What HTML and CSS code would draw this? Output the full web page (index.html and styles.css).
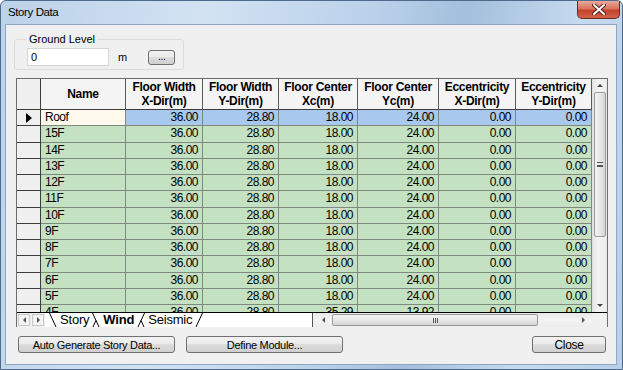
FILE: index.html
```html
<!DOCTYPE html>
<html lang="en">
<head>
  <meta charset="UTF-8">
  <title>Story Data</title>
  <link rel="stylesheet" href="styles.css">
</head>
<body>

<div class="window">
  <div class="titlebar">
    <span class="title">Story Data</span>
    <button class="close-btn">
      <svg width="14" height="11" viewBox="0 0 14 11">
        <path d="M2 1 L12 10 M12 1 L2 10" stroke="#5a1d14" stroke-width="4" stroke-linecap="round"/>
        <path d="M2 1 L12 10 M12 1 L2 10" stroke="#fff" stroke-width="2" stroke-linecap="round"/>
      </svg>
    </button>
  </div>

  <div class="client">
    <fieldset class="group">
      <legend>Ground Level</legend>
      <input class="level" type="text" value="0">
      <span class="unit">m</span>
      <button class="btn dots">...</button>
    </fieldset>

    <div class="spread">
      <div class="spread-main">
        <div class="sheet">
          <div class="rh"></div>
          <div class="hd">Name</div>
          <div class="hd">Floor Width<br>X-Dir(m)</div>
          <div class="hd">Floor Width<br>Y-Dir(m)</div>
          <div class="hd">Floor Center<br>Xc(m)</div>
          <div class="hd">Floor Center<br>Yc(m)</div>
          <div class="hd">Eccentricity<br>X-Dir(m)</div>
          <div class="hd">Eccentricity<br>Y-Dir(m)</div>

          <div class="rh"><i class="marker"></i></div>
          <div class="c name current">Roof</div>
          <div class="c sel">36.00</div><div class="c sel">28.80</div><div class="c sel">18.00</div><div class="c sel">24.00</div><div class="c sel">0.00</div><div class="c sel">0.00</div>

          <div class="rh"></div><div class="c name">15F</div>
          <div class="c">36.00</div><div class="c">28.80</div><div class="c">18.00</div><div class="c">24.00</div><div class="c">0.00</div><div class="c">0.00</div>

          <div class="rh"></div><div class="c name">14F</div>
          <div class="c">36.00</div><div class="c">28.80</div><div class="c">18.00</div><div class="c">24.00</div><div class="c">0.00</div><div class="c">0.00</div>

          <div class="rh"></div><div class="c name">13F</div>
          <div class="c">36.00</div><div class="c">28.80</div><div class="c">18.00</div><div class="c">24.00</div><div class="c">0.00</div><div class="c">0.00</div>

          <div class="rh"></div><div class="c name">12F</div>
          <div class="c">36.00</div><div class="c">28.80</div><div class="c">18.00</div><div class="c">24.00</div><div class="c">0.00</div><div class="c">0.00</div>

          <div class="rh"></div><div class="c name">11F</div>
          <div class="c">36.00</div><div class="c">28.80</div><div class="c">18.00</div><div class="c">24.00</div><div class="c">0.00</div><div class="c">0.00</div>

          <div class="rh"></div><div class="c name">10F</div>
          <div class="c">36.00</div><div class="c">28.80</div><div class="c">18.00</div><div class="c">24.00</div><div class="c">0.00</div><div class="c">0.00</div>

          <div class="rh"></div><div class="c name">9F</div>
          <div class="c">36.00</div><div class="c">28.80</div><div class="c">18.00</div><div class="c">24.00</div><div class="c">0.00</div><div class="c">0.00</div>

          <div class="rh"></div><div class="c name">8F</div>
          <div class="c">36.00</div><div class="c">28.80</div><div class="c">18.00</div><div class="c">24.00</div><div class="c">0.00</div><div class="c">0.00</div>

          <div class="rh"></div><div class="c name">7F</div>
          <div class="c">36.00</div><div class="c">28.80</div><div class="c">18.00</div><div class="c">24.00</div><div class="c">0.00</div><div class="c">0.00</div>

          <div class="rh"></div><div class="c name">6F</div>
          <div class="c">36.00</div><div class="c">28.80</div><div class="c">18.00</div><div class="c">24.00</div><div class="c">0.00</div><div class="c">0.00</div>

          <div class="rh"></div><div class="c name">5F</div>
          <div class="c">36.00</div><div class="c">28.80</div><div class="c">18.00</div><div class="c">24.00</div><div class="c">0.00</div><div class="c">0.00</div>

          <div class="rh"></div><div class="c name">4F</div>
          <div class="c">36.00</div><div class="c">28.80</div><div class="c">35.29</div><div class="c">13.92</div><div class="c">0.00</div><div class="c">0.00</div>
        </div>

        <div class="vscroll">
          <div class="sb-arrow"><i class="tri up"></i></div>
          <div class="v-thumb"><span class="grip-v"></span></div>
          <div class="sb-fill"></div>
          <div class="sb-arrow"><i class="tri down"></i></div>
        </div>
      </div>

      <div class="spread-foot">
        <div class="tab-nav">
          <span class="nav-btn"><i class="tri left"></i></span>
          <span class="nav-btn"><i class="tri right"></i></span>
        </div>
        <div class="tabs">
          <svg class="edge" width="8" height="15" viewBox="0 0 8 15"><path d="M0.5 0 L7.5 15" stroke="#000"/></svg>
          <span class="tab">Story</span>
          <svg class="edge" width="8" height="15" viewBox="0 0 8 15"><path d="M0.5 0 L7.5 15 M0.5 15 L4 7.5" stroke="#000"/></svg>
          <span class="tab active">Wind</span>
          <svg class="edge" width="8" height="15" viewBox="0 0 8 15"><path d="M0.5 15 L7.5 0 M4 7.5 L7.5 15" stroke="#000"/></svg>
          <span class="tab">Seismic</span>
          <svg class="edge" width="8" height="15" viewBox="0 0 8 15"><path d="M0.5 15 L7.5 0" stroke="#000"/></svg>
        </div>
        <div class="hscroll">
          <div class="sb-arrow h"><i class="tri left"></i></div>
          <div class="h-thumb"><span class="grip-h"></span></div>
          <div class="sb-fill"></div>
          <div class="sb-arrow h"><i class="tri right"></i></div>
        </div>
        <div class="corner"></div>
      </div>
    </div>

    <div class="actions">
      <button class="btn wide">Auto Generate Story Data...</button>
      <button class="btn wide">Define Module...</button>
      <button class="btn close">Close</button>
    </div>
  </div>
</div>

</body>
</html>
```

FILE: styles.css
```css
* { box-sizing: border-box; }

body {
  margin: 0;
  font-family: 'Liberation Sans', Arial, sans-serif;
  font-size: 12px;
  color: #000;
  background: #fff;
}

.window {
  width: 623px;
  height: 370px;
  display: flex;
  flex-direction: column;
  border: 1px solid #4f6a8b;
  border-radius: 6px 6px 0 0;
  padding: 0 5px 4px 4px;
  background: linear-gradient(100deg, #bcd2e9 0%, #d2e2f3 30%, #bad1ea 55%, #a3bfdd 68%, #c6daef 85%, #b7cfe9 100%);
}

.titlebar {
  height: 23px;
  display: flex;
  align-items: center;
  padding-left: 3px;
}

.title {
  font-size: 11.5px;
  letter-spacing: -0.4px;
  color: #000;
  margin-top: -1px;
}

.close-btn {
  margin: -5px -3px 0 auto;
  width: 43px;
  height: 18px;
  padding: 0;
  display: flex;
  align-items: center;
  justify-content: center;
  border: 1px solid #6b2a22;
  border-top: none;
  border-radius: 0 0 5px 5px;
  background: linear-gradient(#e9a99c 0%, #d8735f 45%, #c4412a 55%, #d2644a 100%);
}

.client {
  flex: 1;
  display: flex;
  flex-direction: column;
  background: #f0f0f0;
  border: 1px solid #8ea6c2;
}

/* ground level group */
.group {
  margin: 8px 0 0 8px;
  width: 170px;
  padding: 2px 8px 3px 12px;
  border: 1px solid #dcdcdc;
  border-radius: 3px;
  display: flex;
  align-items: center;
}

.group legend {
  font-size: 11px;
  line-height: 13px;
  padding: 0 2px;
  margin-left: 0;
}

.level {
  width: 82px;
  height: 18px;
  border: 1px solid #d5d5d5;
  background: #fff;
  font: 11px 'Liberation Sans', Arial, sans-serif;
  padding: 0 3px;
}

.unit {
  font-size: 11px;
  margin-left: 9px;
}

.btn {
  font: 11px 'Liberation Sans', Arial, sans-serif;
  letter-spacing: -0.3px;
  color: #000;
  border: 1px solid #707070;
  border-radius: 3px;
  background: linear-gradient(#f2f2f2 0%, #ebebeb 45%, #dddddd 50%, #cfcfcf 100%);
  padding: 0;
}

.dots {
  width: 27px;
  height: 15px;
  margin-left: 21px;
  line-height: 10px;
  font-size: 10px;
}

/* spreadsheet */
.spread {
  margin: 8px 0 0 10px;
  width: 592px;
  border: 1px solid #6d6d6d;
  border-bottom: none;
}

.spread-main {
  display: flex;
  height: 233px;
}

.sheet {
  width: 575px;
  height: 233px;
  overflow: hidden;
  display: grid;
  grid-template-columns: 24px 85px 77px 76px 79px 81px 77px 76px;
  grid-template-rows: 31px repeat(13, 16.25px);
  background: #fff;
}

.rh {
  background: #f0f0f0;
  border-right: 1px solid #3c3c3c;
  border-bottom: 1px solid #3c3c3c;
  display: flex;
  align-items: center;
  justify-content: center;
}

.marker {
  width: 0;
  height: 0;
  border-top: 5px solid transparent;
  border-bottom: 5px solid transparent;
  border-left: 6px solid #000;
}

.hd {
  background: #f4f4f4;
  border-right: 1px solid #5a5a5a;
  border-bottom: 1px solid #3c3c3c;
  display: flex;
  align-items: center;
  justify-content: center;
  text-align: center;
  font-weight: bold;
  font-size: 12px;
  letter-spacing: -0.3px;
  line-height: 14px;
}

.c {
  background: #c4e1c1;
  border-right: 1px solid #7f897f;
  border-bottom: 1px solid #7f897f;
  display: flex;
  align-items: center;
  justify-content: flex-end;
  padding: 0 4px 1px 0;
  font-size: 12px;
  letter-spacing: -0.5px;
  white-space: nowrap;
}

.c.name {
  justify-content: flex-start;
  padding: 0 0 1px 4px;
}

.c.sel { background: #a9c8ee; }
.c.current { background: #fff9ee; }

/* scrollbars */
.vscroll {
  width: 15px;
  display: flex;
  flex-direction: column;
  background: linear-gradient(90deg, #e6e6e6, #f4f4f4 40%, #eaeaea);
  border-left: 1px solid #e0e0e0;
}

.sb-arrow {
  height: 13px;
  display: flex;
  align-items: center;
  justify-content: center;
}

.sb-arrow.h {
  width: 12px;
  height: auto;
}

.sb-fill { flex: 1; }

.v-thumb {
  height: 145px;
  margin: 0 1px;
  border: 1px solid #9a9a9a;
  border-radius: 2px;
  background: linear-gradient(90deg, #f3f3f3, #e8e8e8 50%, #d6d6d6);
  display: flex;
  align-items: center;
  justify-content: center;
}

.grip-v {
  width: 6px;
  height: 5px;
  border-top: 1px solid #555;
  border-bottom: 1px solid #555;
  background: linear-gradient(#fff0 2px, #555 2px, #555 3px, #fff0 3px);
}

.h-thumb {
  width: 206px;
  margin: 1px 0;
  border: 1px solid #9a9a9a;
  border-radius: 2px;
  background: linear-gradient(#f3f3f3, #e8e8e8 50%, #d6d6d6);
  display: flex;
  align-items: center;
  justify-content: center;
}

.grip-h {
  width: 5px;
  height: 5px;
  border-left: 1px solid #555;
  border-right: 1px solid #555;
  background: linear-gradient(90deg, #fff0 1px, #555 1px, #555 2px, #fff0 2px);
}

.tri {
  width: 0;
  height: 0;
  border: 3px solid transparent;
}
.tri.up { border-bottom: 3px solid #444; border-top-width: 0; }
.tri.down { border-top: 3px solid #444; border-bottom-width: 0; }
.tri.left { border-right: 3px solid #555; border-left-width: 0; }
.tri.right { border-left: 3px solid #555; border-right-width: 0; }

/* sheet tabs + horizontal scroll */
.spread-foot {
  height: 15px;
  display: flex;
  border-top: 1px solid #000;
}

.tab-nav {
  width: 28px;
  display: flex;
  gap: 2px;
  padding: 1px 0 1px 1px;
  background: #f0f0f0;
}

.nav-btn {
  width: 12px;
  border: 1px solid #c8c8c8;
  background: #f4f4f4;
  display: flex;
  align-items: center;
  justify-content: center;
}

.tabs {
  width: 268px;
  display: flex;
  align-items: center;
  background: #fff;
  border-right: 1px solid #555;
  padding-left: 4px;
  overflow: hidden;
}

.edge { flex: none; display: block; }

.tab {
  font-size: 13px;
  line-height: 14px;
  padding: 0 3px;
  letter-spacing: -0.2px;
}

.tab.active { font-weight: bold; }

.hscroll {
  width: 278px;
  margin-left: 1px;
  display: flex;
  padding: 0 3px;
  background: linear-gradient(#e8e8e8, #f4f4f4 50%, #ececec);
}

.hscroll .sb-arrow:first-child { margin-right: 3px; }

.corner {
  flex: 1;
  background: #f0f0f0;
}

/* bottom buttons */
.actions {
  display: flex;
  gap: 11px;
  padding: 9px 10px 0 12px;
}

.btn.wide {
  width: 157px;
  height: 17px;
}

.btn.close {
  width: 74px;
  height: 17px;
  margin-left: auto;
  font-size: 12px;
}
```
